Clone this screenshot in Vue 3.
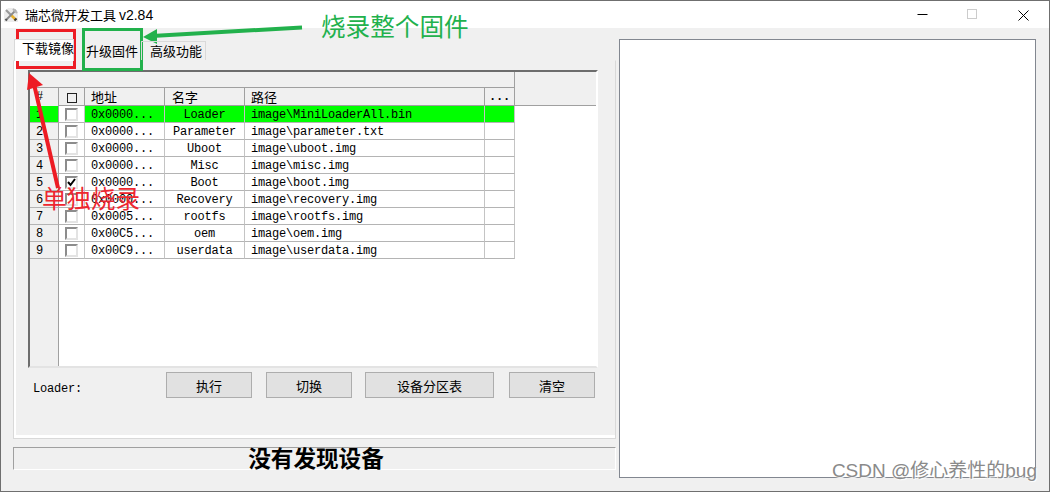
<script setup>
const rows = [
  { n: 1, addr: '0x0000...', name: 'Loader', path: 'image\\MiniLoaderAll.bin', hot: true },
  { n: 2, addr: '0x0000...', name: 'Parameter', path: 'image\\parameter.txt' },
  { n: 3, addr: '0x0000...', name: 'Uboot', path: 'image\\uboot.img' },
  { n: 4, addr: '0x0000...', name: 'Misc', path: 'image\\misc.img' },
  { n: 5, addr: '0x0000...', name: 'Boot', path: 'image\\boot.img', checked: true },
  { n: 6, addr: '0x0000...', name: 'Recovery', path: 'image\\recovery.img' },
  { n: 7, addr: '0x0005...', name: 'rootfs', path: 'image\\rootfs.img' },
  { n: 8, addr: '0x00C5...', name: 'oem', path: 'image\\oem.img' },
  { n: 9, addr: '0x00C9...', name: 'userdata', path: 'image\\userdata.img' }
]
</script>

<template>
  <div class="window">
    <header class="titlebar">
      <svg class="app-icon" width="16" height="16" viewBox="0 0 16 16">
        <rect x="1" y="1" width="14" height="14" fill="#ececec" />
        <path d="M1 1 H5 L1 5 Z M15 1 V5 L11 1 Z" fill="#fff" />
        <path d="M3 3 L8 8" stroke="#9a9a9a" stroke-width="2.2" />
        <path d="M8 8 L13 13" stroke="#e8b230" stroke-width="2.6" />
        <path d="M11.5 13.5 L13.5 11.5" stroke="#3a3a3a" stroke-width="2" />
        <path d="M13 3 L4 12" stroke="#8a8a8a" stroke-width="1.8" />
        <path d="M4 12 L2.5 13.5" stroke="#555" stroke-width="2.4" />
        <path d="M10 2 L14 6" stroke="#b4b4b4" stroke-width="2" />
      </svg>
      <span class="title">瑞芯微开发工具 <span class="version">v2.84</span></span>
      <div class="controls">
        <svg width="11" height="11" viewBox="0 0 11 11" class="ctl-min"><path d="M0.5 5.5 H10.5" stroke="#000" /></svg>
        <svg width="11" height="11" viewBox="0 0 11 11" class="ctl-max"><rect x="0.5" y="0.5" width="9" height="9" fill="none" stroke="#ccc" /></svg>
        <svg width="11" height="11" viewBox="0 0 11 11" class="ctl-close"><path d="M0.5 0.5 L10.5 10.5 M10.5 0.5 L0.5 10.5" stroke="#000" /></svg>
      </div>
    </header>

    <main class="body">
      <section class="left">
        <nav class="tabs">
          <div class="tab active">下载镜像</div>
          <div class="tab second">升级固件</div>
          <div class="tab third">高级功能</div>
        </nav>
        <div class="panel">
          <div class="grid">
            <div class="head-top"><div class="head-span"></div></div>
            <div class="head-row">
              <div class="c-n">#</div>
              <div class="c-c"><span class="head-box"></span></div>
              <div class="c-a cjk">地址</div>
              <div class="c-m cjk left-text">名字</div>
              <div class="c-p cjk">路径</div>
              <div class="c-x">...</div>
            </div>
            <div v-for="r in rows" :key="r.n" class="row" :class="{ hot: r.hot }">
              <div class="c-n">{{ r.n }}</div>
              <div class="c-c">
                <span class="check">
                  <svg v-if="r.checked" width="9" height="9" viewBox="0 0 9 9"><path d="M1 4 L3.5 7 L8 1" fill="none" stroke="#000" stroke-width="2" /></svg>
                </span>
              </div>
              <div class="c-a">{{ r.addr }}</div>
              <div class="c-m">{{ r.name }}</div>
              <div class="c-p">{{ r.path }}</div>
              <div class="c-x"></div>
            </div>
          </div>
          <div class="toolbar">
            <span class="loader">Loader:</span>
            <button class="btn">执行</button>
            <button class="btn">切换</button>
            <button class="btn wide">设备分区表</button>
            <button class="btn">清空</button>
          </div>
        </div>
        <div class="status">没有发现设备</div>
      </section>
      <section class="log"></section>
    </main>

    <svg class="marks" width="1050" height="492" viewBox="0 0 1050 492">
      <rect x="17.5" y="30.5" width="57" height="37" fill="none" stroke="#ed1c24" stroke-width="3" />
      <rect x="83.5" y="29.5" width="58" height="40" fill="none" stroke="#22b14c" stroke-width="3" />
      <path d="M34 84 L58 188" stroke="#ed1c24" stroke-width="4" />
      <polygon points="29,73 27,90 43,85" fill="#ed1c24" />
      <path d="M152 36 L302 27.5" stroke="#22b14c" stroke-width="4" />
      <polygon points="143,37 157,29 157,44" fill="#22b14c" />
    </svg>
    <div class="note green">烧录整个固件</div>
    <div class="note red">单独烧录</div>
    <div class="watermark">CSDN @修心养性的bug</div>
  </div>
</template>

<style scoped>
.window {
  position: relative;
  width: 1050px;
  height: 492px;
  box-sizing: border-box;
  border: 1px solid #6f6f6f;
  background: #f0f0f0;
  display: flex;
  flex-direction: column;
  overflow: hidden;
  font-family: "Liberation Mono", "Noto Sans CJK SC", monospace;
  color: #000;
}
.titlebar {
  height: 27px;
  flex: none;
  background: #fff;
  display: flex;
  align-items: center;
}
.app-icon { margin-left: 2px; flex: none; }
.title {
  margin-left: 6px;
  font: 13px/1 "Noto Sans CJK SC", sans-serif;
}
.version { font-family: "Liberation Sans", sans-serif; font-size: 14px; }
.controls { margin-left: auto; display: flex; align-items: center; }
.controls svg { display: block; }
.ctl-min { margin-right: 39px; }
.ctl-max { margin-right: 40px; }
.ctl-close { margin-right: 20px; margin-top: 1px; }

.body {
  flex: 1;
  display: flex;
  padding: 11px 0 0 12px;
  gap: 3px;
  min-height: 0;
}
.left { width: 603px; flex: none; display: flex; flex-direction: column; }

.tabs { height: 21px; display: flex; align-items: flex-end; font: 13px/1 "Noto Sans CJK SC", sans-serif; position: relative; z-index: 1; padding-left: 1px; }
.tab { box-sizing: border-box; height: 19px; border: 1px solid #d9d9d9; border-bottom: 0; padding-top: 2px; }
.tab.active { width: 60px; height: 22px; margin-bottom: -1px; background: #fff; padding: 1px 0 0 7px; white-space: nowrap; }
.tab.second { width: 67px; padding-left: 12px; border: 0; padding-top: 3px; }
.tab.third { width: 65px; padding-left: 8px; }

.panel {
  height: 379px;
  flex: none;
  box-sizing: border-box;
  border: 1px solid #d9d9d9;
  border-top-color: #f0f0f0;
  box-shadow: inset 2px 0 #fff, inset 0 -3px #fff;
  padding: 9px 0 0 14px;
}
.grid {
  width: 570px;
  height: 298px;
  box-sizing: border-box;
  border-top: 2px solid #6d6d6d;
  border-left: 2px solid #6d6d6d;
  border-right: 2px solid #fff;
  border-bottom: 2px solid #e3e3e3;
  background: linear-gradient(90deg, #f0f0f0 28px, #a0a0a0 28px, #a0a0a0 29px, #fff 29px);
  font-size: 12px;
  letter-spacing: -0.2px;
  line-height: 16px;
}
.head-top { height: 16px; background: #f0f0f0; }
.head-span { box-sizing: border-box; width: 485px; height: 16px; border-right: 1px solid #a0a0a0; border-bottom: 1px solid #a0a0a0; }
.head-row, .row {
  display: grid;
  grid-template-columns: 29px 26px 80px 80px 240px 30px;
  height: 17px;
}
.head-row { height: 18px; background: #f0f0f0; border-bottom: 1px solid #a0a0a0; box-sizing: border-box; }
.row > div { box-sizing: border-box; border-right: 1px solid #c4c4c4; border-bottom: 1px solid #b4b4b4; height: 17px; padding-top: 1px; }
.head-row > div { border-right: 1px solid #a0a0a0; height: 17px; padding-top: 1px; }
.row > .c-n, .head-row > .c-n { padding-left: 6px; border-right-color: #a0a0a0; background: #f0f0f0; }
.row > .c-c { padding-top: 0; }
.row.hot > .c-c { background: #fff; }
.row.hot > .c-n, .row.hot > .c-a, .row.hot > .c-m, .row.hot > .c-p, .row.hot > .c-x { background: #00ff00; }
.c-a, .c-p { padding-left: 6px; white-space: nowrap; }
.c-m { text-align: center; white-space: nowrap; }
.c-m.left-text { text-align: left; padding-left: 7px; }
.head-row > .cjk { font-family: "Noto Sans CJK SC", sans-serif; font-size: 13px; letter-spacing: 0; line-height: 15px; }
.c-c { display: flex; align-items: center; justify-content: center; }
.head-box { width: 10px; height: 10px; box-sizing: border-box; border: 1px solid #222; }
.check {
  width: 13px;
  height: 13px;
  box-sizing: border-box;
  border: 2px solid #e3e3e3;
  border-top-color: #8c8c8c;
  border-left-color: #8c8c8c;
  background: #fff;
  display: flex;
  align-items: center;
  justify-content: center;
}
.c-x { text-align: center; font-weight: 700; }

.toolbar {
  display: grid;
  grid-template-columns: 133px 100px 99px 144px 86px;
  padding: 4px 0 0 5px;
}
.loader { font-size: 12px; letter-spacing: -0.2px; line-height: 16px; padding-top: 9px; }
.btn {
  width: 86px;
  height: 26px;
  padding: 0;
  background: #e1e1e1;
  border: 1px solid #adadad;
  border-radius: 0;
  color: #000;
  font: 13px/1 "Noto Sans CJK SC", sans-serif;
}
.btn.wide { width: 129px; }

.status {
  margin-top: 8px;
  height: 23px;
  box-sizing: border-box;
  border: 1px solid #a0a0a0;
  border-right-color: #fff;
  border-bottom-color: #fff;
  text-align: center;
  font: 700 22.6px/20px "Noto Sans CJK SC", sans-serif;
  padding-left: 3px;
}
.log {
  width: 417px;
  height: 439px;
  flex: none;
  box-sizing: border-box;
  background: #fff;
  border: 1px solid #828790;
}

.marks { position: absolute; left: -1px; top: -1px; pointer-events: none; }
.note {
  position: absolute;
  font-family: "Noto Sans CJK SC", sans-serif;
  white-space: nowrap;
  line-height: 1;
}
.note.green { left: 320px; top: 12px; font-size: 24.6px; color: #22b14c; }
.note.red { left: 41px; top: 185px; font-size: 24.5px; color: #ed2730; }
.watermark {
  position: absolute;
  right: 12px;
  top: 459px;
  font: 19px/1.2 "Liberation Sans", "Noto Sans CJK SC", sans-serif;
  color: #8a8a8a;
  text-shadow: 1px 1px 1px #fff, -1px 0 1px #fff;
  white-space: nowrap;
}
</style>
